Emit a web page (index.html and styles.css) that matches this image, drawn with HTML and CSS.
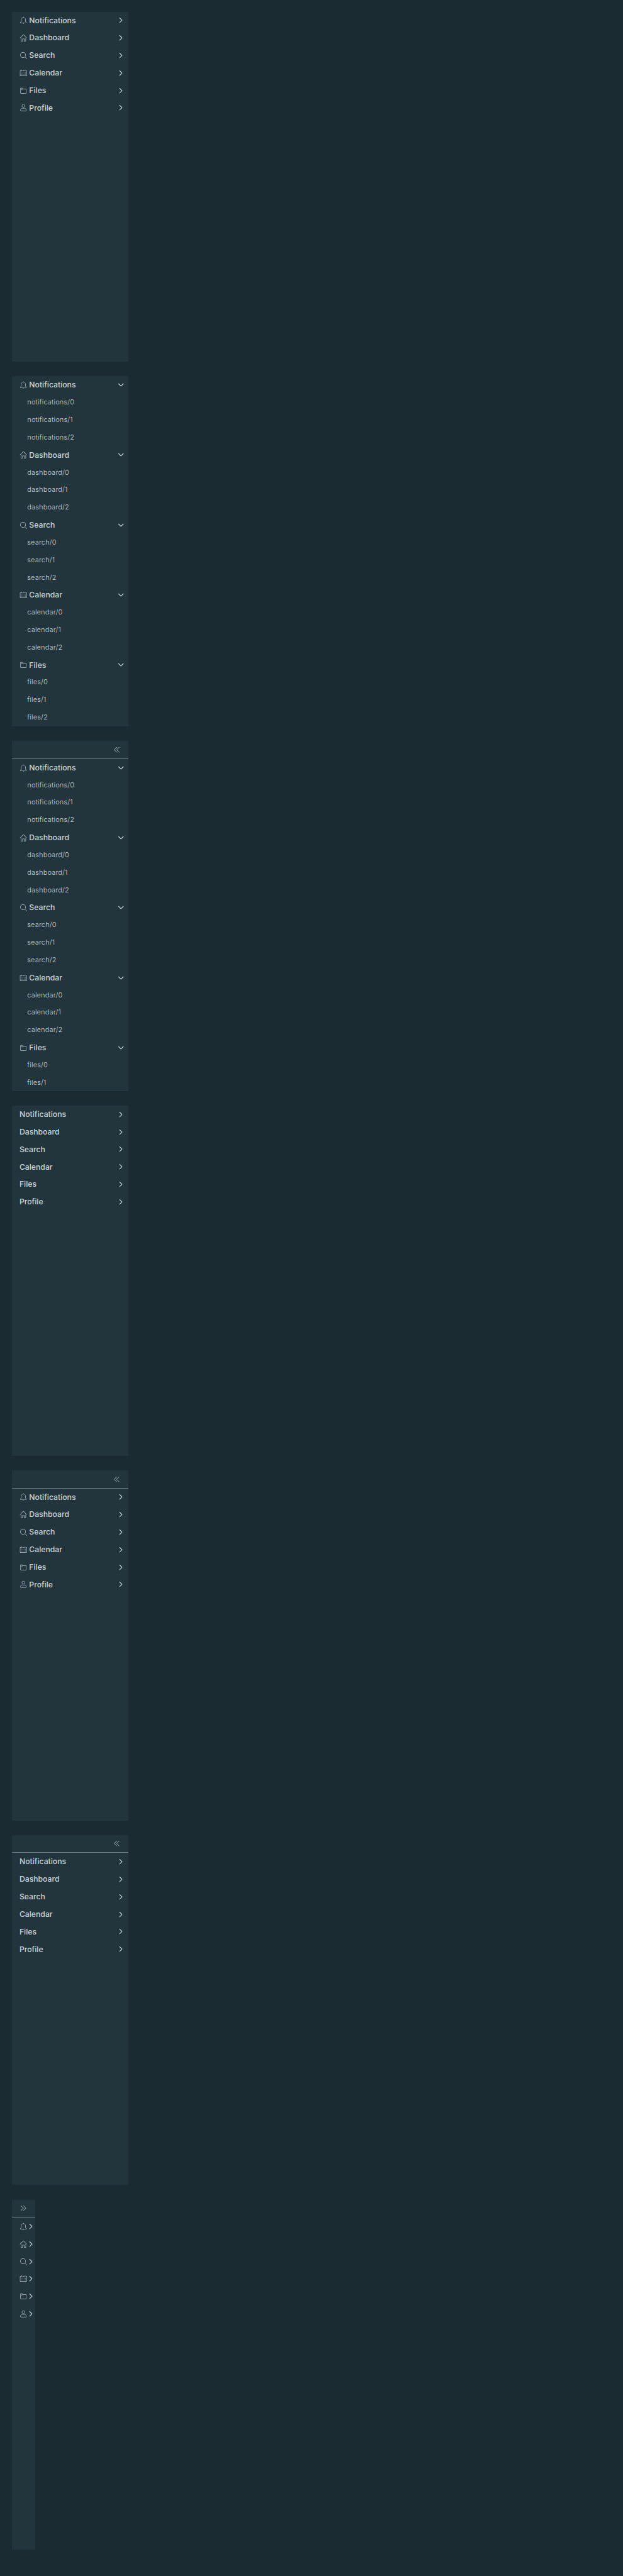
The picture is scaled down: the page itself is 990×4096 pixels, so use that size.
FILE: index.html
```
<!DOCTYPE html>
<html lang="en">
<head>
<meta charset="utf-8">
<title>Vertical navigation</title>
<link rel="stylesheet" href="styles.css">
</head>
<body>
<svg class="sprite" aria-hidden="true">
  <symbol id="bell" viewBox="0 0 36 36"><path d="M32.51,27.83A14.4,14.4,0,0,1,30,24.9a12.63,12.63,0,0,1-1.35-4.81V15.15A10.81,10.81,0,0,0,19.21,4.4V3.11a1.33,1.33,0,1,0-2.67,0V4.42A10.81,10.81,0,0,0,7.21,15.15v4.94A12.63,12.63,0,0,1,5.86,24.9a14.4,14.4,0,0,1-2.47,2.93,1,1,0,0,0-.34.75v1.36a1,1,0,0,0,1,1h27.8a1,1,0,0,0,1-1V28.58A1,1,0,0,0,32.51,27.83ZM5.13,28.94a16.17,16.17,0,0,0,2.44-3,14.24,14.24,0,0,0,1.65-5.85V15.15a8.74,8.74,0,1,1,17.47,0v4.94a14.24,14.24,0,0,0,1.65,5.85,16.17,16.17,0,0,0,2.44,3Z"/><path d="M18,34.28A2.67,2.67,0,0,0,20.58,32H15.32A2.67,2.67,0,0,0,18,34.28Z"/></symbol>
  <symbol id="home" viewBox="0 0 36 36"><path d="M33.71,17.29l-15-15a1,1,0,0,0-1.41,0l-15,15a1,1,0,0,0,1.41,1.41L18,4.41,32.29,18.71a1,1,0,0,0,1.41-1.41Z"/><path d="M28,32h-5V22H13V32H8V18L6,20V32a2,2,0,0,0,2,2h7V24h6V34h7a2,2,0,0,0,2-2V19.76l-2-2Z"/></symbol>
  <symbol id="search" viewBox="0 0 36 36"><path d="M16.33,5.05A10.95,10.95,0,1,1,5.39,16,11,11,0,0,1,16.33,5.05m0-2.05a13,13,0,1,0,13,13,13,13,0,0,0-13-13Z"/><path d="M35,33.29l-7.37-7.42-1.42,1.41,7.37,7.42A1,1,0,1,0,35,33.29Z"/></symbol>
  <symbol id="calendar" viewBox="0 0 36 36"><path d="M32.25,6H29V8h3V30H4V8H7V6H3.75A1.78,1.78,0,0,0,2,7.81V30.19A1.78,1.78,0,0,0,3.75,32h28.5A1.78,1.78,0,0,0,34,30.19V7.81A1.78,1.78,0,0,0,32.25,6Z"/><path d="M8,14h2v2H8zM14,14h2v2h-2zM20,14h2v2h-2zM26,14h2v2h-2zM8,19h2v2H8zM14,19h2v2h-2zM20,19h2v2h-2zM26,19h2v2h-2zM8,24h2v2H8zM14,24h2v2h-2zM20,24h2v2h-2zM26,24h2v2h-2zM13,6h10v2H13z"/><path d="M10,10a1,1,0,0,0,1-1V3A1,1,0,0,0,9,3V9A1,1,0,0,0,10,10ZM26,10a1,1,0,0,0,1-1V3a1,1,0,0,0-2,0V9A1,1,0,0,0,26,10Z"/></symbol>
  <symbol id="folder" viewBox="0 0 36 36"><path d="M30,9H16.42L14.11,5.82A2,2,0,0,0,12.49,5H6A2,2,0,0,0,4,7V29a2,2,0,0,0,2,2H30a2,2,0,0,0,2-2V11A2,2,0,0,0,30,9Zm0,20H6V13h7.31a2,2,0,0,0,2-2H6V7h6.49l2.61,3.59a1,1,0,0,0,.81.41H30Z"/></symbol>
  <symbol id="user" viewBox="0 0 36 36"><path class="outline" d="M18 3.5a6.5 6.5 0 1 0 0 13a6.5 6.5 0 1 0 0-13ZM13 20.5C8 21.5 4.5 24.500 4.500 28V31a2 2 0 0 0 2 2H29.500a2 2 0 0 0 2-2V28C31.500 24.500 28 21.500 23 20.500C20.500 22 15.500 22 13 20.500Z"/></symbol>
  <symbol id="right" viewBox="0 0 16 16"><path class="stroke" d="M5.4 3.2 10.2 8 5.4 12.8"/></symbol>
  <symbol id="down" viewBox="0 0 16 16"><path class="stroke" d="M3.2 5.5 8 10.3 12.8 5.5"/></symbol>
  <symbol id="collapse" viewBox="0 0 16 16"><path class="stroke thin" d="M8.300 3 3.300 8l5 5M13.300 3 8.300 8l5 5"/></symbol>
  <symbol id="expand" viewBox="0 0 16 16"><path class="stroke thin" d="M3 3l5 5-5 5M8 3l5 5-5 5"/></symbol>
</svg>

<nav class="nav">
  <div class="group"><svg class="icon"><use href="#bell"/></svg><span class="label">Notifications</span><svg class="caret"><use href="#right"/></svg></div>
  <div class="group"><svg class="icon"><use href="#home"/></svg><span class="label">Dashboard</span><svg class="caret"><use href="#right"/></svg></div>
  <div class="group"><svg class="icon"><use href="#search"/></svg><span class="label">Search</span><svg class="caret"><use href="#right"/></svg></div>
  <div class="group"><svg class="icon"><use href="#calendar"/></svg><span class="label">Calendar</span><svg class="caret"><use href="#right"/></svg></div>
  <div class="group"><svg class="icon"><use href="#folder"/></svg><span class="label">Files</span><svg class="caret"><use href="#right"/></svg></div>
  <div class="group"><svg class="icon"><use href="#user"/></svg><span class="label">Profile</span><svg class="caret"><use href="#right"/></svg></div>
</nav>

<nav class="nav">
  <div class="group"><svg class="icon"><use href="#bell"/></svg><span class="label">Notifications</span><svg class="caret"><use href="#down"/></svg></div>
  <div class="item">notifications/0</div>
  <div class="item">notifications/1</div>
  <div class="item">notifications/2</div>
  <div class="group"><svg class="icon"><use href="#home"/></svg><span class="label">Dashboard</span><svg class="caret"><use href="#down"/></svg></div>
  <div class="item">dashboard/0</div>
  <div class="item">dashboard/1</div>
  <div class="item">dashboard/2</div>
  <div class="group"><svg class="icon"><use href="#search"/></svg><span class="label">Search</span><svg class="caret"><use href="#down"/></svg></div>
  <div class="item">search/0</div>
  <div class="item">search/1</div>
  <div class="item">search/2</div>
  <div class="group"><svg class="icon"><use href="#calendar"/></svg><span class="label">Calendar</span><svg class="caret"><use href="#down"/></svg></div>
  <div class="item">calendar/0</div>
  <div class="item">calendar/1</div>
  <div class="item">calendar/2</div>
  <div class="group"><svg class="icon"><use href="#folder"/></svg><span class="label">Files</span><svg class="caret"><use href="#down"/></svg></div>
  <div class="item">files/0</div>
  <div class="item">files/1</div>
  <div class="item">files/2</div>
</nav>

<nav class="nav">
  <div class="trigger"><svg class="icon"><use href="#collapse"/></svg></div>
  <div class="group"><svg class="icon"><use href="#bell"/></svg><span class="label">Notifications</span><svg class="caret"><use href="#down"/></svg></div>
  <div class="item">notifications/0</div>
  <div class="item">notifications/1</div>
  <div class="item">notifications/2</div>
  <div class="group"><svg class="icon"><use href="#home"/></svg><span class="label">Dashboard</span><svg class="caret"><use href="#down"/></svg></div>
  <div class="item">dashboard/0</div>
  <div class="item">dashboard/1</div>
  <div class="item">dashboard/2</div>
  <div class="group"><svg class="icon"><use href="#search"/></svg><span class="label">Search</span><svg class="caret"><use href="#down"/></svg></div>
  <div class="item">search/0</div>
  <div class="item">search/1</div>
  <div class="item">search/2</div>
  <div class="group"><svg class="icon"><use href="#calendar"/></svg><span class="label">Calendar</span><svg class="caret"><use href="#down"/></svg></div>
  <div class="item">calendar/0</div>
  <div class="item">calendar/1</div>
  <div class="item">calendar/2</div>
  <div class="group"><svg class="icon"><use href="#folder"/></svg><span class="label">Files</span><svg class="caret"><use href="#down"/></svg></div>
  <div class="item">files/0</div>
  <div class="item">files/1</div>
</nav>

<nav class="nav">
  <div class="group"><span class="label">Notifications</span><svg class="caret"><use href="#right"/></svg></div>
  <div class="group"><span class="label">Dashboard</span><svg class="caret"><use href="#right"/></svg></div>
  <div class="group"><span class="label">Search</span><svg class="caret"><use href="#right"/></svg></div>
  <div class="group"><span class="label">Calendar</span><svg class="caret"><use href="#right"/></svg></div>
  <div class="group"><span class="label">Files</span><svg class="caret"><use href="#right"/></svg></div>
  <div class="group"><span class="label">Profile</span><svg class="caret"><use href="#right"/></svg></div>
</nav>

<nav class="nav">
  <div class="trigger"><svg class="icon"><use href="#collapse"/></svg></div>
  <div class="group"><svg class="icon"><use href="#bell"/></svg><span class="label">Notifications</span><svg class="caret"><use href="#right"/></svg></div>
  <div class="group"><svg class="icon"><use href="#home"/></svg><span class="label">Dashboard</span><svg class="caret"><use href="#right"/></svg></div>
  <div class="group"><svg class="icon"><use href="#search"/></svg><span class="label">Search</span><svg class="caret"><use href="#right"/></svg></div>
  <div class="group"><svg class="icon"><use href="#calendar"/></svg><span class="label">Calendar</span><svg class="caret"><use href="#right"/></svg></div>
  <div class="group"><svg class="icon"><use href="#folder"/></svg><span class="label">Files</span><svg class="caret"><use href="#right"/></svg></div>
  <div class="group"><svg class="icon"><use href="#user"/></svg><span class="label">Profile</span><svg class="caret"><use href="#right"/></svg></div>
</nav>

<nav class="nav">
  <div class="trigger"><svg class="icon"><use href="#collapse"/></svg></div>
  <div class="group"><span class="label">Notifications</span><svg class="caret"><use href="#right"/></svg></div>
  <div class="group"><span class="label">Dashboard</span><svg class="caret"><use href="#right"/></svg></div>
  <div class="group"><span class="label">Search</span><svg class="caret"><use href="#right"/></svg></div>
  <div class="group"><span class="label">Calendar</span><svg class="caret"><use href="#right"/></svg></div>
  <div class="group"><span class="label">Files</span><svg class="caret"><use href="#right"/></svg></div>
  <div class="group"><span class="label">Profile</span><svg class="caret"><use href="#right"/></svg></div>
</nav>

<nav class="nav collapsed">
  <div class="trigger"><svg class="icon"><use href="#expand"/></svg></div>
  <div class="group"><svg class="icon"><use href="#bell"/></svg><svg class="caret"><use href="#right"/></svg></div>
  <div class="group"><svg class="icon"><use href="#home"/></svg><svg class="caret"><use href="#right"/></svg></div>
  <div class="group"><svg class="icon"><use href="#search"/></svg><svg class="caret"><use href="#right"/></svg></div>
  <div class="group"><svg class="icon"><use href="#calendar"/></svg><svg class="caret"><use href="#right"/></svg></div>
  <div class="group"><svg class="icon"><use href="#folder"/></svg><svg class="caret"><use href="#right"/></svg></div>
  <div class="group"><svg class="icon"><use href="#user"/></svg><svg class="caret"><use href="#right"/></svg></div>
</nav>
</body>
</html>
```

FILE: styles.css
```
html {
  font-size: 7.7315px;
  background: #1b2b32;
}

body {
  margin: 0;
  padding: 2.4rem 2.4rem 5.3rem;
  display: flex;
  flex-direction: column;
  gap: 3rem;
  font-family: Inter, "Liberation Sans", sans-serif;
  color: #c8d3d8;
}

.sprite {
  display: none;
}

.nav {
  box-sizing: border-box;
  flex: none;
  width: 24rem;
  height: 72rem;
  overflow: hidden;
  background: #22343c;
}

.trigger {
  box-sizing: border-box;
  height: 3.7rem;
  padding-right: 1.6rem;
  display: flex;
  align-items: center;
  justify-content: flex-end;
  border-bottom: 1px solid #6b7e86;
}

.group {
  height: 3.6rem;
  padding: 0 0.8rem 0 1.6rem;
  display: flex;
  align-items: center;
}

.icon,
.caret {
  flex: none;
  width: 1.6rem;
  height: 1.6rem;
  fill: #bdc9cf;
  color: #bdc9cf;
}

.caret {
  margin-left: auto;
  color: #c8d3d8;
}

.stroke {
  fill: none;
  stroke: currentColor;
  stroke-width: 1.5;
  stroke-linecap: round;
  stroke-linejoin: round;
}

.thin {
  stroke-width: 1.15;
}

.outline {
  fill: none;
  stroke: currentColor;
  stroke-width: 2;
}

.label {
  font-size: 1.58rem;
  font-weight: 500;
  line-height: 3.6rem;
}

.icon + .label {
  margin-left: 0.4rem;
}

.item {
  height: 3.6rem;
  padding-left: 3.2rem;
  font-size: 1.42rem;
  line-height: 3.6rem;
  font-weight: 300;
  letter-spacing: 0.015em;
}

.collapsed {
  width: 4.8rem;
}

.collapsed .group {
  padding-right: 0;
}

.collapsed .caret {
  margin: 0;
}

.collapsed .caret .stroke {
  stroke-width: 1.8;
}
```
